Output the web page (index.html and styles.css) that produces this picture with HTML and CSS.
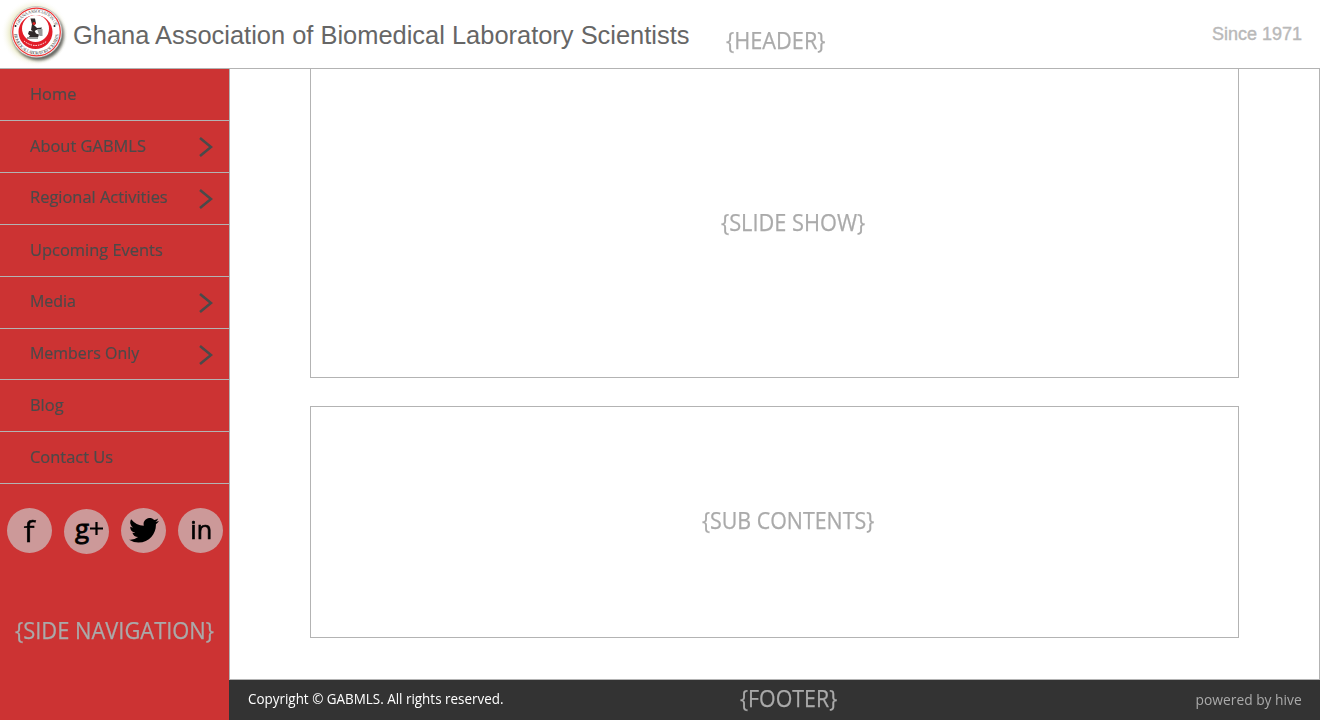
FILE: index.html
```
<!DOCTYPE html>
<html lang="en"><head><meta charset="utf-8"><title>GABMLS</title>
<link rel="stylesheet" href="styles.css"></head>
<body>
<div class="page">
<header class="header">
<svg class="logo" width="72" height="68" viewBox="0 0 72 68">
<defs>
<radialGradient id="glow"><stop offset=".72" stop-color="#e9e9c4"/><stop offset="1" stop-color="#fff" stop-opacity="0"/></radialGradient>
<filter id="soft" x="-20%" y="-20%" width="140%" height="140%"><feGaussianBlur stdDeviation="1.7"/></filter>
<path id="ringTop" d="M17 32a19.500 19.500 0 0 1 39 0"/>
<path id="ringBottom" d="M14 32a22.500 22.500 0 0 0 45 0"/>
</defs>
<circle cx="35" cy="33" r="34" fill="url(#glow)"/>
<circle cx="38.500" cy="35" r="25.500" fill="#444" opacity=".8" filter="url(#soft)"/>
<circle cx="36.500" cy="32" r="25.500" fill="#f5f5f5" stroke="#aaa" stroke-width=".6"/>
<circle cx="36.500" cy="32" r="23.800" fill="#fff" stroke="#e33" stroke-width="1.200"/>
<g font-family="Liberation Serif, serif" font-size="4.600" fill="#555">
<text><textPath href="#ringTop" startOffset="7" textLength="48">GHANA ASSOCIATION OF</textPath></text>
<text><textPath href="#ringBottom" startOffset="2" textLength="66">BIOMEDICAL LABORATORY SCIENTISTS</textPath></text>
</g>
<circle cx="35.500" cy="32" r="17" fill="#e21d28"/>
<circle cx="35.500" cy="28.500" r="13.500" fill="#fff"/>
<path d="M30.500 18.500h4.500l1 5-2 2-2-1zM32 24l3 2 2 2 5-.5-1 2-5 .5-2 2-3-2zM29 31l6 .5 1 2 3 1-1 3-10 .5 2-2.500-2-1.500z" fill="#30292a"/>
<path d="M37 29h5.500v7h-3zM27 37h11v2h-11z" fill="#999"/>
<circle cx="34" cy="23.500" r="1.500" fill="#d22"/>
<path d="M24 41q11.500 9 23 0" fill="none" stroke="#fff" stroke-width="1" stroke-dasharray="1.500 1"/>
<circle cx="15.500" cy="26" r="1" fill="#222"/><circle cx="54.500" cy="26" r="1" fill="#222"/>
</svg>
<h1 class="title">Ghana Association of Biomedical Laboratory Scientists</h1>
<span class="label label-header">{HEADER}</span>
<span class="since">Since 1971</span>
</header>
<div class="body">
<aside class="side">
<nav class="nav">
<a class="item"><span>Home</span></a>
<a class="item"><span>About GABMLS</span><svg class="arrow" viewBox="0 0 14 20"><path d="M1 1l11 9-11 9"/></svg></a>
<a class="item up"><span>Regional Activities</span><svg class="arrow" viewBox="0 0 14 20"><path d="M1 1l11 9-11 9"/></svg></a>
<a class="item"><span>Upcoming Events</span></a>
<a class="item up tight"><span>Media</span><svg class="arrow" viewBox="0 0 14 20"><path d="M1 1l11 9-11 9"/></svg></a>
<a class="item up tight short"><span>Members Only</span><svg class="arrow" viewBox="0 0 14 20"><path d="M1 1l11 9-11 9"/></svg></a>
<a class="item"><span>Blog</span></a>
<a class="item"><span>Contact Us</span></a>
</nav>
<div class="social">
<span class="dot"><span class="glyph f">f</span></span>
<span class="dot low"><span class="glyph g">g</span><svg class="plus" width="13" height="13" viewBox="0 0 13 13"><path d="M6.500 0v13M0 6.500h13"/></svg></span>
<span class="dot"><svg class="bird" width="30" height="25" viewBox="0 0 24 20"><path d="M24 2.370a9.800 9.800 0 0 1-2.830.77A4.930 4.930 0 0 0 23.340.410a9.900 9.900 0 0 1-3.130 1.200A4.920 4.920 0 0 0 11.830 6.100 13.980 13.980 0 0 1 1.670.950a4.920 4.920 0 0 0 1.520 6.570A4.900 4.900 0 0 1 .960 6.900a4.930 4.930 0 0 0 3.950 4.890 4.900 4.900 0 0 1-2.220.080 4.930 4.930 0 0 0 4.600 3.420A9.900 9.900 0 0 1 0 17.330 13.950 13.950 0 0 0 7.550 19.540c9.140 0 14.300-7.720 13.980-14.640A10 10 0 0 0 24 2.370z"/></svg></span>
<span class="dot"><span class="glyph in">in</span></span>
</div>
<div class="label label-side">{SIDE NAVIGATION}</div>
</aside>
<div class="main">
<main class="content">
<section class="box slides"><span class="label label-slides">{SLIDE SHOW}</span></section>
<section class="box sub"><span class="label label-sub">{SUB CONTENTS}</span></section>
</main>
<footer class="footer">
<span class="copy">Copyright © GABMLS. All rights reserved.</span>
<span class="label label-footer">{FOOTER}</span>
<span class="powered">powered by hive</span>
</footer>
</div>
</div>
</div>
</body></html>
```
FILE: styles.css
```
*{box-sizing:border-box}
body{margin:0;background:#fff;font-family:"Open Sans","Noto Sans",sans-serif}
.page{width:1320px;height:720px;display:flex;flex-direction:column;overflow:hidden}
.header{height:69px;flex:none;display:flex;border-bottom:1px solid #b3b3b3}
.logo{flex:none}
.title{margin:0;padding:20px 0 0 1px;width:654px;font:400 25.45px/30px "Liberation Sans",Arial,sans-serif;color:#666;white-space:nowrap}
.label{font-size:24px;line-height:32px;color:#aaa;white-space:nowrap;transform-origin:0 50%;transform:scaleX(.906);-webkit-text-stroke:.25px #aaa}
.label-header{margin-top:24px;align-self:flex-start}
.since{margin:24px 18px 0 auto;align-self:flex-start;font:18px/20px "Liberation Sans",Arial,sans-serif;color:#b9b9b9;-webkit-text-stroke:.4px #b9b9b9}
.body{flex:1;display:flex;min-height:0}
.side{width:229px;flex:none;background:#c33}
.item{display:flex;justify-content:space-between;height:52px;padding:13px 16px 0 30px;border-bottom:1px solid #b3b3b3;color:#4a4a4a;font-size:17px;line-height:24px;white-space:nowrap}
.item span{transform-origin:0 50%;align-self:flex-start;transform:scaleX(.967);-webkit-text-stroke:.2px #4a4a4a}
.item.up span{margin-top:-1px}
.item.tight span{transform:scaleX(.938)}
.item.short{height:51px}
.arrow{width:14px;height:20px;margin-top:2.5px;fill:none;stroke:#4a4a4a;stroke-width:2.500}
.social{display:flex;gap:12px;padding:24px 0 0 7px}
.dot{width:45px;height:45px;border-radius:50%;background:#c99;display:flex;align-items:center;justify-content:center}
.dot.low{margin-top:1px}
.glyph{font-size:30px;line-height:30px;font-weight:400;-webkit-text-stroke:.5px #000}
.glyph.f{transform:scaleX(1.06)}
.glyph.g{font-size:26px;padding-bottom:7px;margin-left:5px;-webkit-text-stroke:.8px #000}
.glyph.in{font-size:26px;padding:0 0 4px 2px;-webkit-text-stroke:.7px #000;transform:scaleX(.97)}
.plus{stroke:#000;stroke-width:2.200;flex:none;margin:0 0 6px 1px}
.label-side{margin:60px 0 0 15px;width:200px;transform:scaleX(.911)}
.main{flex:1;display:flex;flex-direction:column}
.content{height:611px;border:1px solid #b3b3b3;border-top:0;padding:0 80px}
.box{border:1px solid #b3b3b3;display:flex;align-items:flex-start}
.slides{border-top:0;height:309px;padding:137px 0 0 410px}
.sub{height:232px;margin-top:28px;padding:97px 0 0 391px}
.label-sub{transform:scaleX(.891)}
.footer{flex:1;background:#333;display:flex;align-items:flex-start;padding:0 18px 0 19px}
.copy{color:#fff;font-size:14px;line-height:20px;margin-top:9px;width:266px;white-space:nowrap;transform-origin:0 50%;transform:scaleX(.959)}
.powered{color:#aaa;font-size:14px;line-height:20px;margin-top:10px;margin-left:auto;transform-origin:100% 50%;transform:scaleX(.985)}
.label-footer{margin-top:2px;margin-left:226px;transform:scaleX(.891)}
```
